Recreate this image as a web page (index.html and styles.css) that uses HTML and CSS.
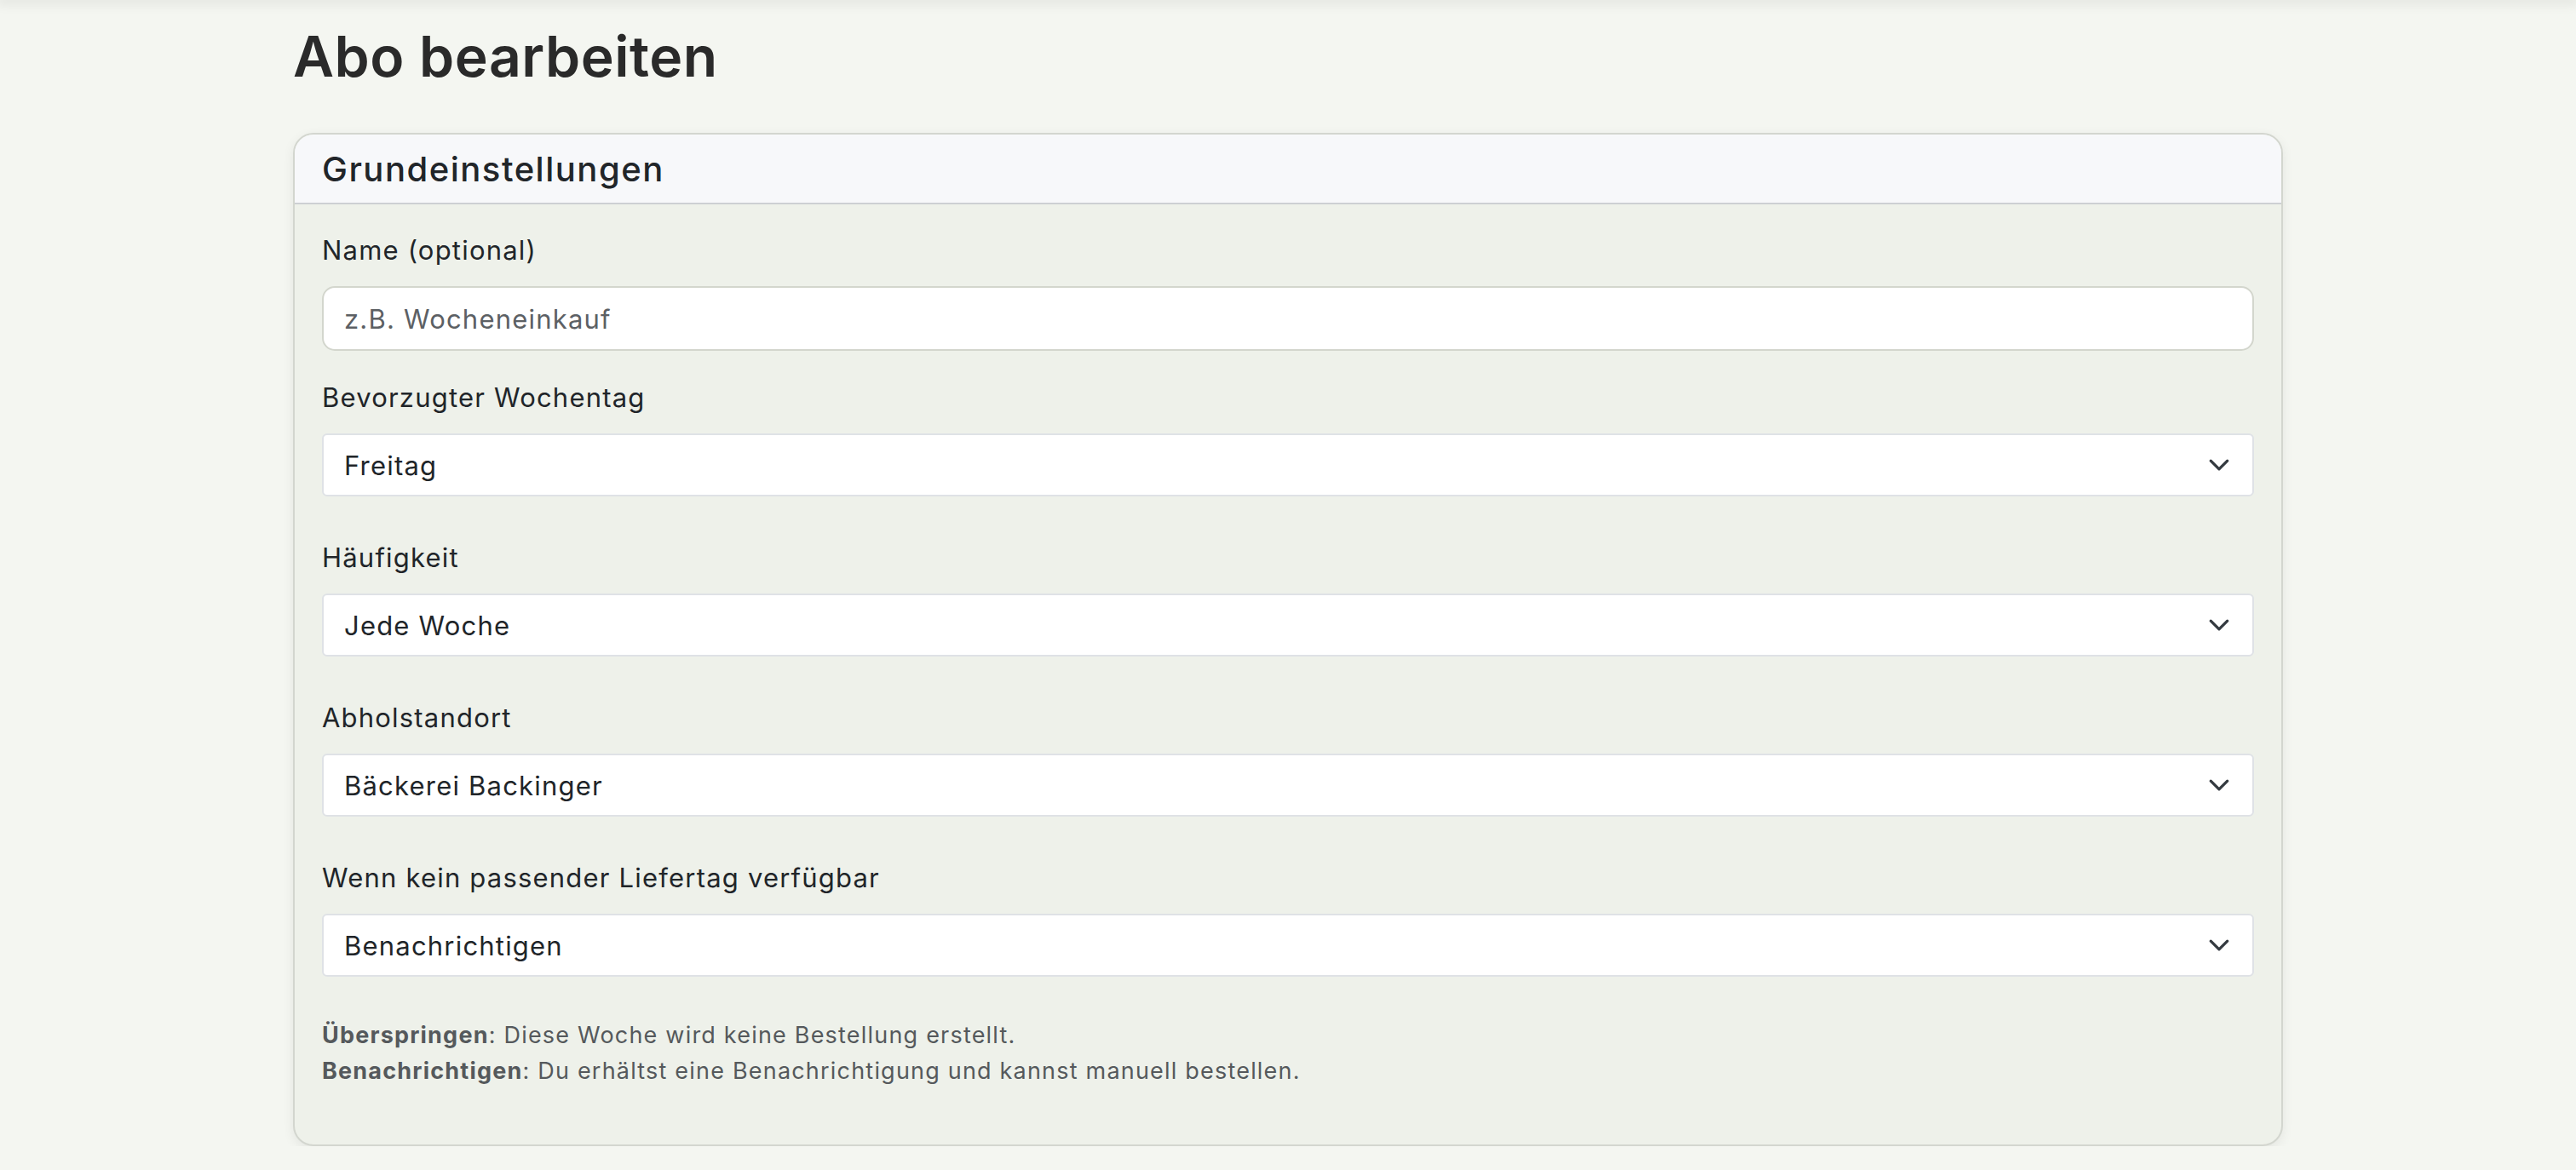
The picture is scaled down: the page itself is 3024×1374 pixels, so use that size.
FILE: index.html
```html
<!DOCTYPE html>
<html lang="de">
<head>
  <meta charset="UTF-8" />
  <meta name="viewport" content="width=device-width, initial-scale=1" />
  <title>Abo bearbeiten</title>
  <link rel="stylesheet" href="styles.css">
</head>
<body>

  <div class="top-shadow"></div>

  <main class="container">
    <h1>Abo bearbeiten</h1>

    <section class="card">
      <div class="card-header">
        <h2>Grundeinstellungen</h2>
      </div>

      <form class="card-body" id="abo-form">
        <div class="field">
          <label for="abo-name">Name (optional)</label>
          <input type="text" id="abo-name" placeholder="z.B. Wocheneinkauf" />
        </div>

        <div class="field field-select">
          <label for="abo-weekday">Bevorzugter Wochentag</label>
          <div class="select-wrap">
            <select id="abo-weekday">
              <option>Montag</option>
              <option>Dienstag</option>
              <option>Mittwoch</option>
              <option>Donnerstag</option>
              <option selected>Freitag</option>
              <option>Samstag</option>
            </select>
            <svg class="chevron" viewBox="0 0 16 16"><path d="M2 5l6 6 6-6" /></svg>
          </div>
        </div>

        <div class="field field-select">
          <label for="abo-interval">Häufigkeit</label>
          <div class="select-wrap">
            <select id="abo-interval">
              <option selected>Jede Woche</option>
              <option>Alle 2 Wochen</option>
              <option>Alle 4 Wochen</option>
            </select>
            <svg class="chevron" viewBox="0 0 16 16"><path d="M2 5l6 6 6-6" /></svg>
          </div>
        </div>

        <div class="field field-select">
          <label for="abo-location">Abholstandort</label>
          <div class="select-wrap">
            <select id="abo-location">
              <option selected>Bäckerei Backinger</option>
            </select>
            <svg class="chevron" viewBox="0 0 16 16"><path d="M2 5l6 6 6-6" /></svg>
          </div>
        </div>

        <div class="field field-select">
          <label for="abo-fallback">Wenn kein passender Liefertag verfügbar</label>
          <div class="select-wrap">
            <select id="abo-fallback">
              <option>Überspringen</option>
              <option selected>Benachrichtigen</option>
            </select>
            <svg class="chevron" viewBox="0 0 16 16"><path d="M2 5l6 6 6-6" /></svg>
          </div>
        </div>

        <p class="help">
          <strong>Überspringen</strong>: Diese Woche wird keine Bestellung erstellt.<br>
          <strong>Benachrichtigen</strong>: Du erhältst eine Benachrichtigung und kannst manuell bestellen.
        </p>
      </form>
    </section>
  </main>

</body>
</html>
```

FILE: styles.css
```css
body {
  font-family: Inter, "Noto Sans", sans-serif;
  margin: 0;
  background: #f4f6f1;
  color: #222528;
}
.top-shadow {
  height: 0;
  box-shadow: 0 0 14px 4px rgba(0,0,0,0.10);
}
.container {
  width: 2336px;
  margin: 0 auto;
}
h1 {
  font-size: 66px;
  font-weight: 600;
  line-height: 1.2;
  margin: 27px 0 50px 0;
  color: #2a2a2a;
  letter-spacing: 0.5px;
}
.card {
  background: #eef1ea;
  border: 2px solid #d3d6cf;
  border-radius: 24px;
  box-shadow: 0 4px 14px rgba(0,0,0,0.07);
  overflow: hidden;
}
.card-header {
  background: #f7f8fa;
  border-bottom: 2px solid #cdd0d3;
  height: 80px;
  padding: 0 32px;
  display: flex;
  align-items: center;
}
.card-header h2 {
  margin: 0;
  font-size: 40px;
  font-weight: 500;
  color: #212529;
  letter-spacing: 1.5px;
}
.card-body {
  padding: 30px 32px 65px 32px;
}
.field {
  margin-bottom: 31px;
}
.field-select {
  margin-bottom: 48px;
}
.field label {
  display: block;
  font-size: 31px;
  line-height: 48px;
  margin-bottom: 18px;
  color: #212529;
  letter-spacing: 1.2px;
}
.field input, .field select {
  width: 100%;
  box-sizing: border-box;
  font-family: inherit;
  font-size: 31px;
  letter-spacing: 1.2px;
  color: #212529;
  background: #fff;
  padding: 0 24px;
  margin: 0;
}
.field input {
  height: 76px;
  border: 2px solid #d3d6cd;
  border-radius: 15px;
  outline: none;
}
.field input::placeholder {
  color: #5c6064;
}
.select-wrap {
  position: relative;
}
.field select {
  height: 74px;
  border: 2px solid #dfe2e6;
  border-radius: 6px;
  appearance: none;
  -webkit-appearance: none;
}
.chevron {
  position: absolute;
  right: 28px;
  top: 24px;
  width: 26px;
  height: 26px;
  fill: none;
  stroke: #343a40;
  stroke-width: 2;
  stroke-linecap: round;
  stroke-linejoin: round;
  pointer-events: none;
}
.help {
  margin: 0;
  font-size: 27px;
  line-height: 42px;
  letter-spacing: 1.2px;
  color: #55595c;
}
.help strong {
  font-weight: 700;
}
```
